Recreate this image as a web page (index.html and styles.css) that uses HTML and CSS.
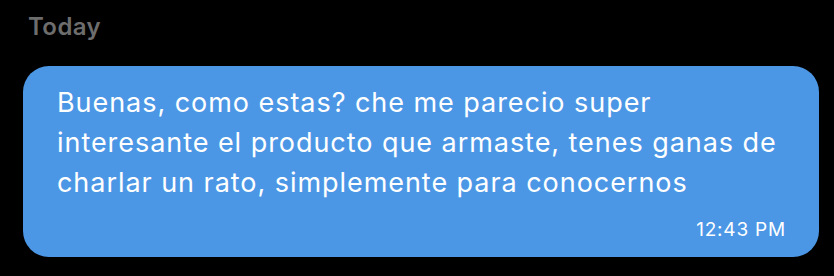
FILE: index.html
```html
<!DOCTYPE html>
<html lang="es">
<head>
    <meta charset="UTF-8">
    <meta name="viewport" content="width=device-width, initial-scale=1.0">
    <title>Chat</title>
    <link rel="stylesheet" href="styles.css">
</head>
<body>
    <section class="chat">
        <div class="day-label">Today</div>

        <!-- Outgoing message -->
        <div class="bubble">
            <p class="bubble-text">Buenas, como estas? che me parecio super interesante el producto que armaste, tenes ganas de charlar un rato, simplemente para conocernos</p>
            <div class="bubble-time">12:43 PM</div>
        </div>
    </section>
</body>
</html>
```

FILE: styles.css
```css
body, html {
    margin: 0;
    padding: 0;
    background-color: #000;
    font-family: Inter, "Noto Sans", sans-serif;
}

.chat {
    padding: 12px 15px 0 23px;
}

.day-label {
    color: #6d6d6d;
    font-size: 24px;
    font-weight: 600;
    letter-spacing: 0.4px;
    line-height: 30px;
    padding-left: 5px;
    margin-bottom: 24px;
}

.bubble {
    background-color: #4b97e6;
    border-radius: 26px;
    padding: 17px 33px 15px 34px;
    color: #fff;
}

.bubble-text {
    margin: 0;
    font-size: 27px;
    letter-spacing: 0.95px;
    line-height: 40px;
}

.bubble-time {
    text-align: right;
    font-size: 19px;
    letter-spacing: 0.8px;
    line-height: 24px;
    margin-top: 15px;
}
```
